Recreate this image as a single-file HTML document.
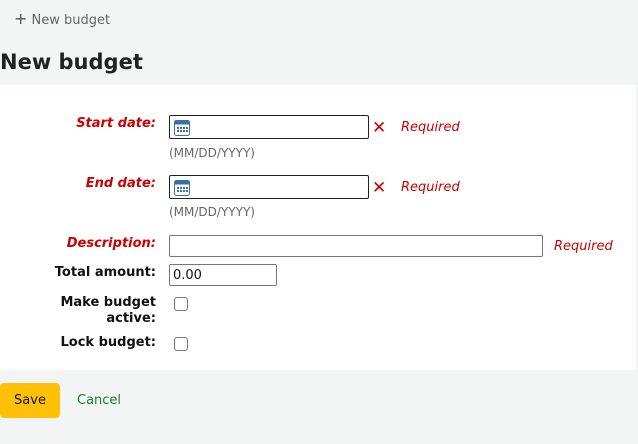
<!DOCTYPE html>
<html><head><style>
body{margin:0;width:638px;height:444px;background:#f3f4f4;font-family:"DejaVu Sans","Liberation Sans",sans-serif;position:relative;overflow:hidden;color:#111}
.a{position:absolute}
.lab{position:absolute;right:482px;font-size:13px;font-weight:bold;text-align:right;line-height:16px}
.req{color:#c00;font-style:italic}
.in{position:absolute;box-sizing:border-box;border:1px solid #767676;background:#fff;border-radius:2px}
.dt{border-color:#222}
.hint{position:absolute;left:169px;font-size:12px;color:#666}
.x{position:absolute;color:#c00;font-size:17px;font-weight:bold;line-height:16px}
.rq{position:absolute;color:#c00;font-size:13px;font-style:italic}
.cb{position:absolute;left:174px;width:12px;height:12px;border:1px solid #767676;border-radius:3px;background:#fff}
.cal{position:absolute;left:4px;top:4px}
</style></head><body>
<div class="a" style="left:14px;top:9px;font-size:13px;color:#666"><span style="font-size:16px;color:#555">+</span> New budget</div>
<div class="a" style="left:0;top:50px;font-size:21px;font-weight:bold;color:#222">New budget</div>
<div class="a" style="left:0;top:85px;width:636px;height:285px;background:#fff"></div>

<div class="lab req" style="top:116px">Start date:</div>
<div class="in dt" style="left:169px;top:115px;width:200px;height:24px"><svg class="cal" width="16" height="16" viewBox="0 0 16 16"><rect x="0.5" y="0.5" width="15" height="15" rx="2" fill="#fff" stroke="#3a6ea5"/><rect x="0.5" y="0.5" width="15" height="4" fill="#3a6ea5"/><g fill="#3a6ea5"><rect x="3" y="7" width="2" height="2"/><rect x="6" y="7" width="2" height="2"/><rect x="9" y="7" width="2" height="2"/><rect x="12" y="7" width="2" height="2"/><rect x="3" y="10" width="2" height="2"/><rect x="6" y="10" width="2" height="2"/><rect x="9" y="10" width="2" height="2"/><rect x="12" y="10" width="2" height="2"/></g></svg></div>
<div class="x" style="left:372px;top:120px">✕</div>
<div class="rq" style="left:401px;top:120px">Required</div>
<div class="hint" style="top:146px">(MM/DD/YYYY)</div>

<div class="lab req" style="top:176px">End date:</div>
<div class="in dt" style="left:169px;top:175px;width:200px;height:24px"><svg class="cal" width="16" height="16" viewBox="0 0 16 16"><rect x="0.5" y="0.5" width="15" height="15" rx="2" fill="#fff" stroke="#3a6ea5"/><rect x="0.5" y="0.5" width="15" height="4" fill="#3a6ea5"/><g fill="#3a6ea5"><rect x="3" y="7" width="2" height="2"/><rect x="6" y="7" width="2" height="2"/><rect x="9" y="7" width="2" height="2"/><rect x="12" y="7" width="2" height="2"/><rect x="3" y="10" width="2" height="2"/><rect x="6" y="10" width="2" height="2"/><rect x="9" y="10" width="2" height="2"/><rect x="12" y="10" width="2" height="2"/></g></svg></div>
<div class="x" style="left:372px;top:180px">✕</div>
<div class="rq" style="left:401px;top:180px">Required</div>
<div class="hint" style="top:205px">(MM/DD/YYYY)</div>

<div class="lab req" style="top:236px">Description:</div>
<div class="in" style="left:169px;top:235px;width:374px;height:22px"></div>
<div class="rq" style="left:554px;top:239px">Required</div>

<div class="lab" style="top:265px">Total amount:</div>
<div class="in" style="left:169px;top:264px;width:108px;height:22px;font-size:13px;padding:3px 0 0 3px">0.00</div>

<div class="lab" style="top:295px">Make budget<br>active:</div>
<div class="cb" style="top:297px"></div>
<div class="lab" style="top:335px">Lock budget:</div>
<div class="cb" style="top:337px"></div>

<div class="a" style="left:0;top:383px;width:60px;height:35px;background:#ffc107;border-radius:4px;font-size:13px;line-height:35px;text-align:center;color:#111">Save</div>
<div class="a" style="left:77px;top:393px;font-size:13px;color:#1e7b2c">Cancel</div>
</body></html>
